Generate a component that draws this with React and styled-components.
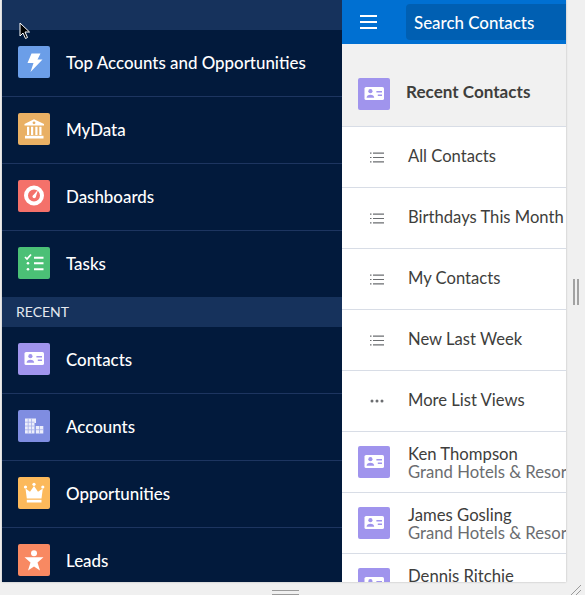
import React from "react";
import styled, { createGlobalStyle } from "styled-components";

const Global = createGlobalStyle`
  html, body { margin: 0; padding: 0; background: #f0f0f0; }
  #root { width: 585px; height: 595px; overflow: hidden; }
`;

const Page = styled.div`
  position: relative;
  width: 585px;
  height: 595px;
  box-sizing: border-box;
  padding: 0 19px 13px 2px;
  background: #f0f0f0;
  font-family: "Lato", "Liberation Sans", sans-serif;
  overflow: hidden;
`;
const Frame = styled.div`
  display: flex;
  height: 582px;
  overflow: hidden;
  box-shadow: 0 0 2px rgba(0, 0, 0, 0.25);
`;
const Nav = styled.nav`
  width: 340px;
  flex: none;
  background: #021a3c;
  overflow: hidden;
`;
const NavTop = styled.div`
  height: 30px;
  background: #16325c;
`;
const NavRow = styled.div`
  height: 67px;
  box-sizing: border-box;
  display: flex;
  align-items: center;
  gap: 16px;
  padding: 0 16px 2px;
  border-bottom: 1px solid #1d3560;
  color: #fff;
  font-size: 16.9px;
  font-weight: 500;
  &:last-child { border-bottom: 0; height: 66px; }
`;
const NavList = styled.div``;
const SectionLabel = styled.div`
  height: 30px;
  box-sizing: border-box;
  display: flex;
  align-items: center;
  padding: 0 14px 2px;
  background: #16325c;
  color: #e4e9f0;
  font-size: 14px;
`;
const Tile = styled.span`
  width: 32px;
  height: 32px;
  flex: none;
  border-radius: 2px;
  background: ${(p) => p.$bg};
  display: flex;
  align-items: center;
  justify-content: center;
  svg { display: block; }
`;
const Side = styled.section`
  flex: 1;
  min-width: 0;
  background: #fff;
  display: flex;
  flex-direction: column;
  overflow: hidden;
`;
const Bar = styled.div`
  height: 44px;
  flex: none;
  background: #0070d2;
  display: flex;
  align-items: center;
  padding-left: 18px;
  gap: 29px;
`;
const Burger = styled.span`
  width: 17px;
  height: 14px;
  flex: none;
  display: flex;
  flex-direction: column;
  justify-content: space-between;
  i { display: block; height: 2px; background: #fff; }
`;
const Search = styled.div`
  flex: 1;
  height: 36px;
  background: #005fb2;
  border-radius: 4px 0 0 4px;
  color: #fff;
  font-size: 16.9px;
  font-weight: 500;
  display: flex;
  align-items: center;
  padding-left: 8px;
`;
const SideHead = styled.div`
  height: 83px;
  flex: none;
  box-sizing: border-box;
  background: #f1f1f1;
  border-bottom: 1px solid #d8dde6;
  padding: 34px 16px 0;
  display: flex;
  align-items: flex-start;
  gap: 16px;
`;
const SideTitle = styled.span`
  font-size: 17.1px;
  font-weight: 700;
  color: #3e3e3c;
  line-height: 28px;
`;
const ListRow = styled.div`
  height: 61px;
  flex: none;
  box-sizing: border-box;
  display: flex;
  align-items: center;
  border-bottom: 1px solid #d8dde6;
  color: #3e3e3c;
  font-size: 16.6px;
  white-space: nowrap;
  padding-bottom: 2px;
`;
const RowGlyph = styled.span`
  width: 66px;
  box-sizing: border-box;
  flex: none;
  display: flex;
  justify-content: center;
  padding: 2px 0 0 4px;
`;
const ContactRow = styled.div`
  height: 61px;
  flex: none;
  box-sizing: border-box;
  display: flex;
  align-items: center;
  gap: 18px;
  padding-left: 16px;
  border-bottom: 1px solid #d8dde6;
  white-space: nowrap;
`;
const ContactText = styled.div`
  line-height: 18px;
  min-width: 0;
  padding-top: 1px;
  color: #3e3e3c;
  font-size: 16.7px;
`;
const ContactSub = styled.div`
  color: #6b6d70;
`;
const Pointer = styled.svg`
  position: absolute;
  left: 19px;
  top: 22px;
`;
const GripV = styled.span`
  position: absolute;
  left: 573px;
  top: 279px;
  width: 6px;
  height: 26px;
  border-left: 2px solid #a2a2a2;
  border-right: 2px solid #a2a2a2;
  box-sizing: border-box;
`;
const GripH = styled.span`
  position: absolute;
  left: 272px;
  top: 590px;
  width: 27px;
  height: 5px;
  border-top: 1px solid #9a9a9a;
  border-bottom: 1px solid #9a9a9a;
  box-sizing: border-box;
`;
const Corner = styled.svg`
  position: absolute;
  right: 3px;
  bottom: 0;
`;

const Bolt = () => (
  <svg width="32" height="32" viewBox="0 0 32 32"><path d="M13.500 7.500h9l-3 6h5L12.500 26l3-9H9.500z" fill="#fff" /></svg>
);
const Bank = () => (
  <svg width="32" height="32" viewBox="0 0 32 32" fill="#fff">
    <path d="M16 6.300 26 11v1.400H6.500V11z" />
    <circle cx="16" cy="9.800" r="1.400" fill="#e9b064" />
    <path d="M9 13.800h2.200V22H9zM13 13.800h2.200V22H13zM17.300 13.800h2.200V22h-2.200zM21.300 13.800h2.200V22h-2.200zM7 22.800h18.500v2.700H7z" />
  </svg>
);
const Gauge = () => (
  <svg width="32" height="32" viewBox="0 0 32 32">
    <circle cx="16" cy="15.500" r="8" fill="none" stroke="#fff" strokeWidth="4" />
    <path d="M20 9.800 17.800 17l-3-1.200z" fill="#fff" />
    <circle cx="16.200" cy="16.500" r="1.700" fill="#fff" />
  </svg>
);
const TaskList = () => (
  <svg width="32" height="32" viewBox="0 0 32 32" fill="none" stroke="#fff">
    <path d="M7 10l2 2 4-4.500" strokeWidth="1.700" />
    <path d="M16 10.700h9.500M16 16.300h9.500M16 22.300h9.500" strokeWidth="2" />
    <circle cx="10" cy="16.300" r="1.300" fill="#fff" stroke="none" />
    <circle cx="10" cy="22.300" r="1.300" fill="#fff" stroke="none" />
  </svg>
);
const Card = () => (
  <svg width="32" height="32" viewBox="0 0 32 32">
    <rect x="6.500" y="9" width="19.500" height="13" rx="1.600" fill="#fff" />
    <circle cx="12.400" cy="13.200" r="2.100" fill="#a094ed" />
    <path d="M8.600 19.800c0-2 1.600-3 3.800-3s3.800 1 3.800 3z" fill="#a094ed" />
    <path d="M18.400 13h5.600v1.600h-5.600zM19.800 16.400h4.200V18h-4.200z" fill="#a094ed" />
  </svg>
);
const Buildings = () => (
  <svg width="32" height="32" viewBox="0 0 32 32">
    <path d="M7 8.500h11v4.500h-1.500v10.500H7z" fill="#eceefb" />
    <path d="M17.800 16h7.500v7.500h-7.500z" fill="#eceefb" />
    <path d="M10.200 8.500v15M13.500 8.500v15M7 12.200h9.500M7 16h9.500M7 19.800h9.500M21.500 16v7.500M17.800 19.700h7.500" stroke="#a7b0ea" strokeWidth="0.800" />
  </svg>
);
const Crown = () => (
  <svg width="32" height="32" viewBox="0 0 32 32" fill="#fff">
    <circle cx="7.500" cy="10" r="1.600" /><circle cx="16" cy="7.300" r="1.600" /><circle cx="24.800" cy="10" r="1.600" />
    <path d="M7.500 11.500l4.500 3.300L16 9l4 5.800 4.800-3.300-1.300 10H8.800z" />
    <path d="M8.800 22.800h14.700v2.700H8.800z" />
  </svg>
);
const Person = () => (
  <svg width="32" height="32" viewBox="0 0 32 32" fill="#fff">
    <circle cx="16" cy="9.300" r="3" />
    <path d="M6.500 13.300h19l-6 5.200 2.500 8-6-4-6 4 2.500-8z" />
  </svg>
);
const Lines = () => (
  <svg width="14" height="11" viewBox="0 0 14 11" fill="#6b6d70">
    <path d="M3 0.500h11v1.200H3zM3 4.900h11v1.200H3zM3 9.300h11v1.200H3z" />
    <path d="M0 0.500h1.500v1.200H0zM0 4.900h1.500v1.200H0zM0 9.300h1.500v1.200H0z" />
  </svg>
);
const Dots = () => (
  <svg width="14" height="4" viewBox="0 0 14 4" fill="#6b6d70">
    <circle cx="2" cy="2" r="1.500" /><circle cx="7" cy="2" r="1.500" /><circle cx="12" cy="2" r="1.500" />
  </svg>
);

const topItems = [
  ["Top Accounts and Opportunities", "#6b9ee8", Bolt],
  ["MyData", "#e9b064", Bank],
  ["Dashboards", "#f4716a", Gauge],
  ["Tasks", "#4bc076", TaskList],
];
const recentItems = [
  ["Contacts", "#a094ed", Card],
  ["Accounts", "#7f8de1", Buildings],
  ["Opportunities", "#fcb95b", Crown],
  ["Leads", "#f88962", Person],
];
const views = ["All Contacts", "Birthdays This Month", "My Contacts", "New Last Week"];
const contacts = [
  ["Ken Thompson", "Grand Hotels & Resorts Ltd"],
  ["James Gosling", "Grand Hotels & Resorts Ltd"],
  ["Dennis Ritchie", "Grand Hotels & Resorts Ltd"],
];

const Item = ({ label, bg, Icon }) => (
  <NavRow>
    <Tile $bg={bg}><Icon /></Tile>
    {label}
  </NavRow>
);

export default function App() {
  return (
    <Page>
      <Global />
      <Frame>
        <Nav>
          <NavTop />
          <NavList>
            {topItems.map(([l, b, I]) => <Item key={l} label={l} bg={b} Icon={I} />)}
          </NavList>
          <SectionLabel>RECENT</SectionLabel>
          <NavList>
            {recentItems.map(([l, b, I]) => <Item key={l} label={l} bg={b} Icon={I} />)}
          </NavList>
        </Nav>
        <Side>
          <Bar>
            <Burger><i /><i /><i /></Burger>
            <Search>Search Contacts</Search>
          </Bar>
          <SideHead>
            <Tile $bg="#a094ed"><Card /></Tile>
            <SideTitle>Recent Contacts</SideTitle>
          </SideHead>
          {views.map((v) => (
            <ListRow key={v}><RowGlyph><Lines /></RowGlyph>{v}</ListRow>
          ))}
          <ListRow><RowGlyph><Dots /></RowGlyph>More List Views</ListRow>
          {contacts.map(([n, s]) => (
            <ContactRow key={n}>
              <Tile $bg="#a094ed"><Card /></Tile>
              <ContactText>{n}<ContactSub>{s}</ContactSub></ContactText>
            </ContactRow>
          ))}
        </Side>
      </Frame>
      <Pointer width="12" height="18" viewBox="0 0 12 18">
        <path d="M1 1v13l3-3 2.500 5.500 2-1L6 10h4.500z" fill="#000" stroke="#fff" strokeWidth="1" />
      </Pointer>
      <GripV />
      <GripH />
      <Corner width="12" height="10" viewBox="0 0 12 10">
        <path d="M1 10 11 0M6 10l5-5" stroke="#9a9a9a" strokeWidth="1" />
      </Corner>
    </Page>
  );
}
